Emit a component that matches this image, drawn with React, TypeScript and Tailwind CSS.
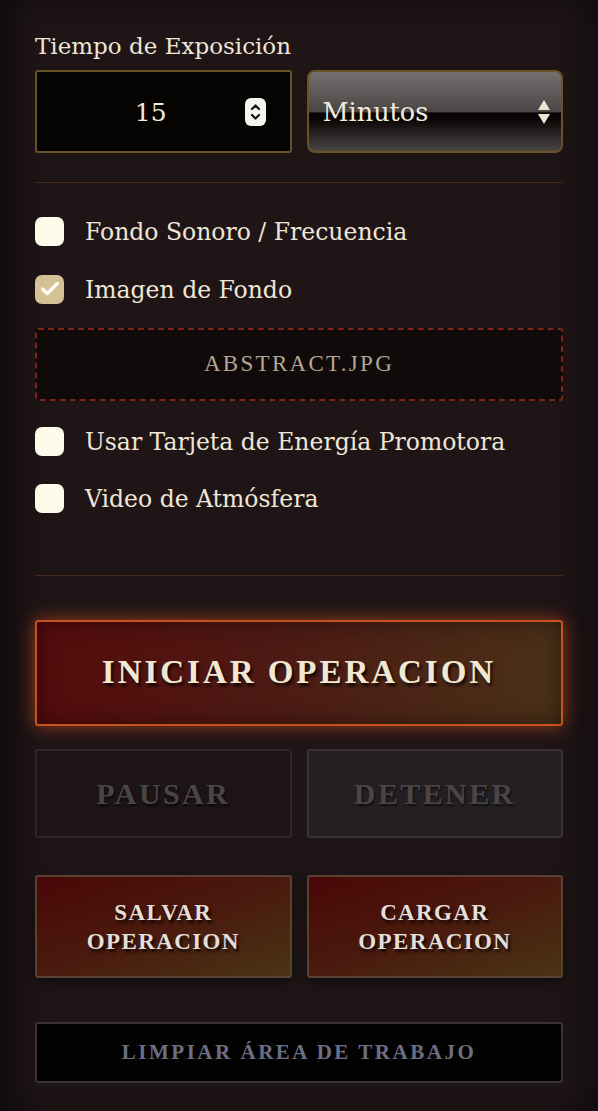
import { Check } from "lucide-react";

const serif = "font-['Liberation_Serif','DejaVu_Serif',serif]";
const body = "font-['DejaVu_Serif','Liberation_Serif',serif]";

function Box({ checked }: { checked?: boolean }) {
  return (
    <span
      className={`w-[29px] h-[29px] rounded-[7px] flex items-center justify-center shrink-0 ${
        checked ? "bg-[#d6c197]" : "bg-[#fffbea]"
      }`}
    >
      {checked && <Check className="w-[22px] h-[22px] text-[#fffdf5]" strokeWidth={3.5} />}
    </span>
  );
}

function Option({ label, checked }: { label: string; checked?: boolean }) {
  return (
    <label className="flex items-center gap-[21px] h-[30px]">
      <Box checked={checked} />
      <span className={`text-[23.5px] text-[#efe6d6] leading-none pt-[4px] ${body}`}>{label}</span>
    </label>
  );
}

export default function App() {
  return (
    <div
      className={`min-h-[1111px] bg-[#1f1517] px-[35px] pt-[31px] pb-[28px] shadow-[inset_28px_0_30px_-10px_rgba(0,0,0,0.45),inset_-28px_0_30px_-10px_rgba(0,0,0,0.35)] ${serif}`}
    >
      {/* Exposure time */}
      <div className={`text-[23px] leading-[30px] text-[#efe6d6] ${body}`}>Tiempo de Exposición</div>
      <div className="grid grid-cols-2 gap-[15px] mt-[9px]">
        <div className="h-[83px] bg-[#060303] border-2 border-[#6a5228] rounded-[3px] flex items-center pl-[20px] pr-[24px]">
          <span className={`flex-1 text-center text-[25px] text-[#f2eadb] pt-[2px] ${body}`}>15</span>
          <span className="w-[21px] h-[28px] bg-[#f7f5f0] rounded-[6px] flex flex-col items-center justify-center">
            <svg width="13" height="22" viewBox="0 0 13 22" fill="none" stroke="#111" strokeWidth="2.2" strokeLinecap="round" strokeLinejoin="round">
              <path d="M3 8 L6.5 4.5 L10 8" />
              <path d="M3 14 L6.5 17.5 L10 14" />
            </svg>
          </span>
        </div>
        <div className="relative h-[83px] border-2 border-[#6a5228] rounded-[8px] overflow-hidden bg-[linear-gradient(to_bottom,#747070_0%,#4a4646_50%,#0a0606_52%,#0a0606_60%,#2a2626_80%,#4a4646_100%)] flex items-center pl-[14px] pr-[10px]">
          <span className={`flex-1 text-[25.5px] text-[#f2eadb] pt-[2px] ${body}`}>Minutos</span>
          <svg width="14" height="26" viewBox="0 0 14 26" fill="#f0e6cf">
            <path d="M7 1 L13 11 L1 11 Z" />
            <path d="M1 15 L13 15 L7 25 Z" />
          </svg>
        </div>
      </div>

      <div className="h-px bg-[#48291d] mt-[29px]" />

      {/* Options */}
      <div className="flex flex-col mt-[33px]">
        <Option label="Fondo Sonoro / Frecuencia" />
        <div className="mt-[28px]">
          <Option label="Imagen de Fondo" checked />
        </div>
        <div className="mt-[24px] h-[73px] border-2 border-dashed border-[#7c2418] rounded-[3px] bg-[#110a0b] flex items-center justify-center">
          <span className="text-[23px] tracking-[0.1em] text-[#b3a692]">ABSTRACT.JPG</span>
        </div>
        <div className="mt-[25px]">
          <Option label="Usar Tarjeta de Energía Promotora" />
        </div>
        <div className="mt-[27px]">
          <Option label="Video de Atmósfera" />
        </div>
      </div>

      <div className="h-px bg-[#48291d] mt-[62px]" />

      {/* Controls */}
      <button className="mt-[44px] w-full h-[106px] rounded-[3px] border-2 border-[#c8521f] bg-[linear-gradient(100deg,#560b0c_0%,#4d1a14_45%,#4a3118_100%)] shadow-[0_0_18px_rgba(215,85,30,0.65),inset_0_0_22px_rgba(0,0,0,0.45)] text-[33px] font-bold tracking-[0.09em] text-[#f1e8d4] [text-shadow:2px_3px_3px_rgba(0,0,0,0.8)]">
        INICIAR OPERACION
      </button>

      <div className="grid grid-cols-2 gap-[15px] mt-[23px]">
        <button className="h-[89px] rounded-[3px] border-2 border-[#2e2628] bg-[#1c1416] text-[30px] font-bold tracking-[0.08em] text-[#4a4446] [text-shadow:1px_2px_2px_rgba(0,0,0,0.6)]">
          PAUSAR
        </button>
        <button className="h-[89px] rounded-[3px] border-2 border-[#383234] bg-[#242022] text-[30px] font-bold tracking-[0.08em] text-[#4a4446] [text-shadow:1px_2px_2px_rgba(0,0,0,0.6)]">
          DETENER
        </button>
      </div>

      <div className="grid grid-cols-2 gap-[15px] mt-[37px]">
        {["SALVAR", "CARGAR"].map((w) => (
          <button
            key={w}
            className="h-[103px] rounded-[3px] border-2 border-[#5a4232] bg-[linear-gradient(160deg,#4a0707_0%,#4a1a0e_50%,#4a3414_100%)] shadow-[0_4px_10px_rgba(0,0,0,0.5)] text-[23px] leading-[29px] font-bold tracking-[0.06em] text-[#e4ddd8] [text-shadow:2px_3px_3px_rgba(0,0,0,0.8)]"
          >
            {w}
            <br />
            OPERACION
          </button>
        ))}
      </div>

      <button className="mt-[44px] w-full h-[61px] rounded-[3px] border-2 border-[#383234] bg-[#030203] text-[21px] font-bold tracking-[0.12em] text-[#6b6f82]">
        LIMPIAR ÁREA DE TRABAJO
      </button>
    </div>
  );
}
